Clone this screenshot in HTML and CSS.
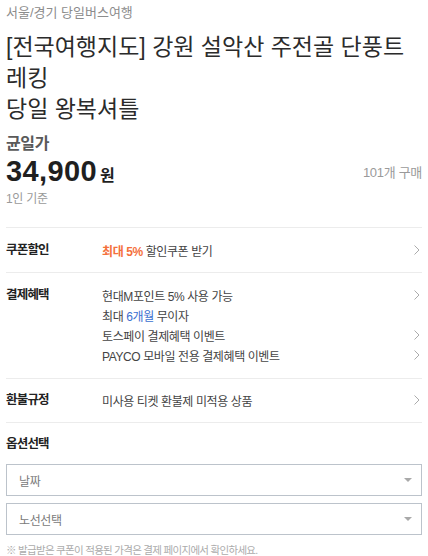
FILE: index.html
```html
<!DOCTYPE html>
<html lang="ko">
<head>
<meta charset="utf-8">
<title>상품 상세</title>
<link rel="stylesheet" href="styles.css">
</head>
<body>
<div class="page">
  <div class="crumb">서울/경기 당일버스여행</div>
  <h1 class="title">[전국여행지도] 강원 설악산 주전골 단풍트레킹<br>당일 왕복셔틀</h1>

  <div class="price-label">균일가</div>
  <div class="price-row">
    <div class="price"><span class="amount">34,900</span><span class="won">원</span></div>
    <div class="sold">101개 구매</div>
  </div>
  <div class="per">1인 기준</div>

  <div class="info">
    <div class="row">
      <div class="label">쿠폰할인</div>
      <div class="values">
        <div class="line"><span><em class="orange">최대 5%</em> 할인쿠폰 받기</span><svg class="chev" viewBox="0 0 6 10"><path d="M0.5 0.5 L5 5 L0.5 9.5"/></svg></div>
      </div>
    </div>
    <div class="row pay">
      <div class="label">결제혜택</div>
      <div class="values">
        <div class="line"><span>현대M포인트 5% 사용 가능</span><svg class="chev" viewBox="0 0 6 10"><path d="M0.5 0.5 L5 5 L0.5 9.5"/></svg></div>
        <div class="line"><span>최대 <em class="blue">6개월</em> 무이자</span></div>
        <div class="line"><span>토스페이 결제혜택 이벤트</span><svg class="chev" viewBox="0 0 6 10"><path d="M0.5 0.5 L5 5 L0.5 9.5"/></svg></div>
        <div class="line"><span>PAYCO 모바일 전용 결제혜택 이벤트</span><svg class="chev" viewBox="0 0 6 10"><path d="M0.5 0.5 L5 5 L0.5 9.5"/></svg></div>
      </div>
    </div>
    <div class="row refund">
      <div class="label">환불규정</div>
      <div class="values">
        <div class="line"><span>미사용 티켓 환불제 미적용 상품</span><svg class="chev" viewBox="0 0 6 10"><path d="M0.5 0.5 L5 5 L0.5 9.5"/></svg></div>
      </div>
    </div>
  </div>

  <div class="options">
    <div class="opt-title">옵션선택</div>
    <div class="select first"><span>날짜</span><svg class="tri" viewBox="0 0 8 4"><path d="M0 0 H8 L4 4 Z"/></svg></div>
    <div class="select"><span>노선선택</span><svg class="tri" viewBox="0 0 8 4"><path d="M0 0 H8 L4 4 Z"/></svg></div>
    <p class="note">※ 발급받은 쿠폰이 적용된 가격은 결제 페이지에서 확인하세요.</p>
  </div>
</div>
</body>
</html>
```

FILE: styles.css
```css
* { box-sizing: border-box; }
html, body { margin: 0; padding: 0; background: #fff; }
body {
  font-family: "Liberation Sans", "Noto Sans CJK KR", sans-serif;
  color: #333;
}
.page { padding: 0 6px; }

.crumb {
  margin-top: 4px;
  font-size: 13px;
  line-height: 18px;
  color: #8c8c8c;
}
.title {
  margin: 10px 0 0;
  font-size: 23px;
  font-weight: 400;
  line-height: 31px;
  color: #2b2b2b;
}
.price-label {
  margin-top: 9px;
  font-size: 16px;
  font-weight: 700;
  line-height: 20px;
  letter-spacing: -0.4px;
  color: #5a5a5a;
}
.price-row {
  display: flex;
  justify-content: space-between;
  align-items: center;
  height: 34px;
}
.price { display: flex; align-items: baseline; color: #1f1f1f; }
.amount {
  font-size: 29px;
  font-weight: 700;
  letter-spacing: 0.4px;
}
.won {
  margin-left: 3px;
  font-size: 16px;
  font-weight: 700;
}
.sold {
  font-size: 13px;
  letter-spacing: -0.3px;
  color: #9a9a9a;
}
.per {
  margin-top: 3px;
  font-size: 12px;
  line-height: 16px;
  letter-spacing: -0.3px;
  color: #9a9a9a;
}

.info { margin-top: 20px; border-top: 1px solid #ececec; }
.row {
  display: flex;
  padding: 12px 0;
  border-bottom: 1px solid #ececec;
}
.row.pay { padding-bottom: 13px; }
.row.refund { padding-top: 11px; }
.label {
  width: 96px;
  flex: none;
  font-size: 12.5px;
  font-weight: 700;
  line-height: 20px;
  letter-spacing: -0.8px;
  color: #222;
}
.values { flex: 1; }
.line {
  display: flex;
  justify-content: space-between;
  align-items: center;
  height: 20px;
  font-size: 12px;
  letter-spacing: -0.4px;
  color: #444;
}
.line em { font-style: normal; }
.orange { color: #f4703c; font-weight: 700; }
.blue { color: #3b6fd0; }
.chev {
  width: 6px;
  height: 10px;
  margin-right: 2px;
  fill: none;
  stroke: #ababab;
  stroke-width: 1;
}

.opt-title {
  margin-top: 13px;
  font-size: 12.5px;
  font-weight: 700;
  line-height: 16px;
  letter-spacing: -0.8px;
  color: #222;
}
.select {
  display: flex;
  justify-content: space-between;
  align-items: center;
  height: 32px;
  margin-top: 7px;
  padding: 0 9px 0 12px;
  border: 1px solid #bcc3cb;
  font-size: 12px;
  letter-spacing: -0.4px;
  color: #7a7a7a;
}
.select.first { margin-top: 12px; }
.tri { width: 8px; height: 4px; fill: #a9a9a9; }
.note {
  margin: 7px 0 0;
  font-size: 10.5px;
  line-height: 16px;
  letter-spacing: -0.7px;
  color: #ababab;
}
```
